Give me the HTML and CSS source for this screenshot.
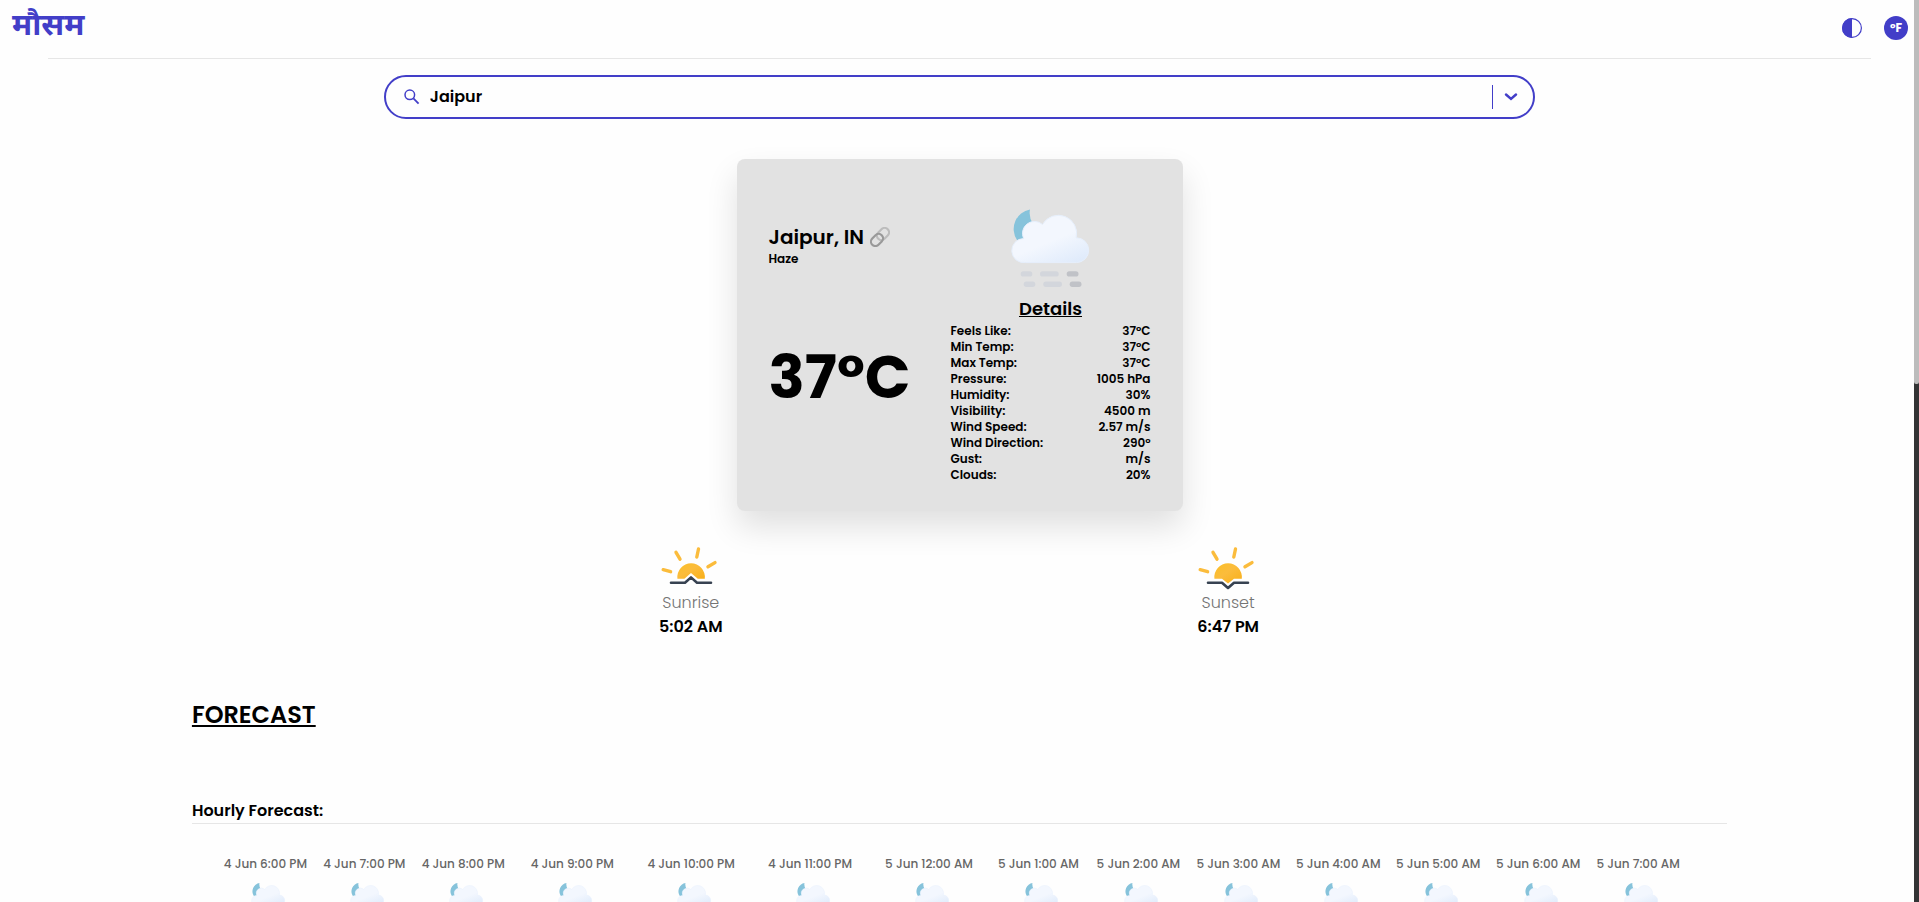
FILE: index.html
```html
<!DOCTYPE html>
<html lang="en">
<head>
<meta charset="utf-8">
<title>मौसम</title>
<link rel="stylesheet" href="styles.css">
</head>
<body>
<svg class="defs" aria-hidden="true">
  <defs>
    <linearGradient id="cloudFill" x1="0.3" y1="0.1" x2="0.9" y2="1">
      <stop offset="0" stop-color="#f3f7fe"/><stop offset="0.45" stop-color="#f3f7fe"/><stop offset="1" stop-color="#deeafb"/>
    </linearGradient>
    <linearGradient id="sunFill" x1="0" y1="0" x2="1" y2="1">
      <stop offset="0" stop-color="#fbbf24"/><stop offset="0.45" stop-color="#fbbc3c"/><stop offset="1" stop-color="#f8af18"/>
    </linearGradient>
    <symbol id="haze" viewBox="0 0 100 100">
      <path fill="#86c3db" d="M29 18.5A19.8 19.8 0 0 0 16 49L34 46L32 33Q27.5 26 29 18.5Z"/>
      <path fill="url(#cloudFill)" stroke="#e6effc" stroke-width="1" d="M24.4 71.6H75.4A12.4 12.4 0 1 0 75.2 46.8A18.3 18.3 0 0 0 41.5 33.5A12 12 0 0 0 22.6 47.5A12.1 12.1 0 1 0 24.4 71.6Z"/>
      <g fill="#d3d6dc">
        <rect x="19.7" y="80.2" width="11.6" height="5.3" rx="2.6"/>
        <rect x="39" y="80.2" width="18.7" height="5.3" rx="2.6"/>
        <rect x="22.7" y="90.6" width="11.6" height="5.3" rx="2.6"/>
        <rect x="42.3" y="90.6" width="18.7" height="5.3" rx="2.6"/>
      </g>
      <g fill="#c0c2c7">
        <rect x="65.7" y="80.2" width="11.8" height="5.3" rx="2.6"/>
        <rect x="68.7" y="90.6" width="11.8" height="5.3" rx="2.6"/>
      </g>
    </symbol>
    <symbol id="rays" viewBox="0 0 64 64">
      <path fill="none" stroke="#fbbc3c" stroke-width="3.4" stroke-linecap="round" d="M17 25.3L21 32.2M39.5 22L37.8 30M56 35.6L49 39.8M4.2 42.7L11.6 44.7"/>
    </symbol>
  </defs>
</svg>

<header class="topbar">
  <a class="logo" href="#">मौसम</a>
  <div class="actions">
    <button class="theme" type="button" aria-label="Toggle theme">
      <svg viewBox="0 0 20 20"><circle cx="10" cy="10" r="9.4" fill="none" stroke="currentColor" stroke-width="1.2"/><path fill="currentColor" d="M10 0A10 10 0 0 0 10 20Z"/></svg>
    </button>
    <button class="unit" type="button">°F</button>
  </div>
</header>
<hr class="rule">

<main>
  <form class="search" role="search">
    <svg class="search-icon" viewBox="0 0 16 16"><circle cx="5.8" cy="5.8" r="4.8" fill="none" stroke="currentColor" stroke-width="1.5"/><path d="M9.4 9.4L14.6 14.6" stroke="currentColor" stroke-width="1.8"/></svg>
    <input class="search-input" type="text" value="Jaipur" aria-label="City">
    <button class="search-toggle" type="button" aria-label="Show cities">
      <svg viewBox="0 0 14 8"><path d="M2 1.5L7 6L12 1.5" fill="none" stroke="currentColor" stroke-width="2.4" stroke-linecap="round"/></svg>
    </button>
  </form>

  <section class="card">
    <div class="summary">
      <div>
        <h1 class="city">Jaipur, IN
          <a class="link" href="#" aria-label="Link to city"><svg viewBox="0 0 20 20"><g fill="none" stroke-width="2.2"><rect x="6.3" y="2.6" width="13.4" height="8.8" rx="4.4" stroke="#bcbcbc" transform="rotate(-45 13 7)"/><rect x="0.3" y="8.6" width="13.4" height="8.8" rx="4.4" stroke="#999" transform="rotate(-45 7 13)"/></g></svg></a>
        </h1>
        <p class="condition">Haze</p>
      </div>
      <p class="temp">37°C</p>
    </div>
    <div class="details">
      <svg class="weather" role="img" aria-label="Haze"><use href="#haze"/></svg>
      <h2 class="details-title">Details</h2>
      <dl class="facts">
        <div><dt>Feels Like:</dt><dd>37°C</dd></div>
        <div><dt>Min Temp:</dt><dd>37°C</dd></div>
        <div><dt>Max Temp:</dt><dd>37°C</dd></div>
        <div><dt>Pressure:</dt><dd>1005 hPa</dd></div>
        <div><dt>Humidity:</dt><dd>30%</dd></div>
        <div><dt>Visibility:</dt><dd>4500 m</dd></div>
        <div><dt>Wind Speed:</dt><dd>2.57 m/s</dd></div>
        <div><dt>Wind Direction:</dt><dd>290°</dd></div>
        <div><dt>Gust:</dt><dd>m/s</dd></div>
        <div><dt>Clouds:</dt><dd>20%</dd></div>
      </dl>
    </div>
  </section>

  <section class="sun">
    <div class="sun-item">
      <svg class="sun-icon" viewBox="0 0 64 64"><use href="#rays"/><path fill="url(#sunFill)" d="M18.4 51.7A13.8 13.8 0 1 1 45.8 51.7H38.8L32 46L25.4 51.7Z"/><path fill="none" stroke="#374251" stroke-width="2.6" stroke-linecap="round" stroke-linejoin="round" d="M12 55.7H26L32 50.4L38 55.7H52"/></svg>
      <span class="sun-name">Sunrise</span>
      <strong class="sun-time">5:02 AM</strong>
    </div>
    <div class="sun-item">
      <svg class="sun-icon" viewBox="0 0 64 64"><use href="#rays"/><path fill="url(#sunFill)" d="M18.4 51.7A13.8 13.8 0 1 1 45.8 51.7H38L32 56.6L26 51.7Z"/><path fill="none" stroke="#374251" stroke-width="2.6" stroke-linecap="round" stroke-linejoin="round" d="M12 55.7H26L32 61L38 55.7H52"/></svg>
      <span class="sun-name">Sunset</span>
      <strong class="sun-time">6:47 PM</strong>
    </div>
  </section>

  <section class="forecast">
    <h2 class="forecast-title">FORECAST</h2>
    <h3 class="hourly-title">Hourly Forecast:</h3>
    <ol class="hours">
      <li>4 Jun 6:00 PM<svg><use href="#haze"/></svg></li>
      <li>4 Jun 7:00 PM<svg><use href="#haze"/></svg></li>
      <li>4 Jun 8:00 PM<svg><use href="#haze"/></svg></li>
      <li>4 Jun 9:00 PM<svg><use href="#haze"/></svg></li>
      <li>4 Jun 10:00 PM<svg><use href="#haze"/></svg></li>
      <li>4 Jun 11:00 PM<svg><use href="#haze"/></svg></li>
      <li>5 Jun 12:00 AM<svg><use href="#haze"/></svg></li>
      <li>5 Jun 1:00 AM<svg><use href="#haze"/></svg></li>
      <li>5 Jun 2:00 AM<svg><use href="#haze"/></svg></li>
      <li>5 Jun 3:00 AM<svg><use href="#haze"/></svg></li>
      <li>5 Jun 4:00 AM<svg><use href="#haze"/></svg></li>
      <li>5 Jun 5:00 AM<svg><use href="#haze"/></svg></li>
      <li>5 Jun 6:00 AM<svg><use href="#haze"/></svg></li>
      <li>5 Jun 7:00 AM<svg><use href="#haze"/></svg></li>
    </ol>
  </section>
</main>
<div class="scrollbar" aria-hidden="true"><div class="scrollbar-thumb"></div></div>
</body>
</html>
```
FILE: styles.css
```css
* { box-sizing: border-box; margin: 0; padding: 0; }
html { height: 100%; overflow: hidden; }
body {
  height: 100%;
  overflow: hidden;
  background: #fefefe;
  color: #000;
  font-family: Poppins, Inter, "Noto Sans", sans-serif;
  font-size: 16px;
  line-height: 24px;
}
svg { display: block; flex: none; }
button { border: 0; background: none; font: inherit; color: inherit; cursor: pointer; }
.defs { position: absolute; width: 0; height: 0; }

.topbar {
  display: flex;
  justify-content: space-between;
  align-items: center;
  height: 58px;
  padding: 0 11px 2px 12px;
}
.logo {
  color: #423ec8;
  font-family: "Noto Sans Devanagari", "Noto Sans", sans-serif;
  font-size: 31px;
  font-weight: 700;
  line-height: 42px;
  text-decoration: none;
}
.actions { display: flex; align-items: center; gap: 22px; color: #423ec8; }
.theme svg { width: 20px; height: 20px; }
.unit {
  width: 24px;
  height: 24px;
  border-radius: 50%;
  background: #423ec8;
  color: #fff;
  font-size: 12px;
  font-weight: 700;
  line-height: 24px;
}
.rule { border: 0; height: 1px; width: 95%; margin: 0 auto; background: #e6e6e6; }

.search {
  display: flex;
  align-items: center;
  width: 60%;
  height: 44px;
  margin: 16px auto 0;
  padding: 0 15px 0 18px;
  border: 2px solid #423ec8;
  border-radius: 22px;
  color: #423ec8;
}
.search-icon { width: 16px; height: 16px; }
.search-input {
  flex: 1;
  min-width: 0;
  margin-left: 10px;
  border: 0;
  outline: 0;
  background: none;
  color: #000;
  font: inherit;
  font-weight: 600;
}
.search-toggle {
  height: 24px;
  padding-left: 11px;
  border-left: 1px solid #423ec8;
}
.search-toggle svg { width: 14px; height: 8px; }

.card {
  display: grid;
  grid-template-columns: 150px 200px;
  gap: 32px;
  width: max-content;
  margin: 40px auto 0;
  padding: 32px 32px 28px;
  border-radius: 8px;
  background: #e2e2e2;
  box-shadow: 0 16px 32px rgba(0, 0, 0, 0.12);
  font-weight: 600;
}
.summary { display: flex; flex-direction: column; gap: 70px; padding-top: 32px; }
.city {
  display: flex;
  align-items: center;
  gap: 6px;
  font-size: 20px;
  font-weight: 600;
  line-height: 28px;
  white-space: nowrap;
}
.link svg { width: 20px; height: 20px; }
.condition { font-size: 12px; line-height: 16px; }
.temp { font-size: 60px; font-weight: 700; line-height: 80px; white-space: nowrap; }
.weather { width: 100px; height: 100px; margin: 0 auto; }
.details-title {
  margin-top: 4px;
  font-size: 18px;
  font-weight: 600;
  line-height: 28px;
  text-align: center;
  text-decoration: underline;
}
.facts { font-size: 12px; line-height: 16px; }
.facts div { display: flex; justify-content: space-between; }

.sun {
  display: grid;
  grid-template-columns: 1fr 1fr;
  width: 56%;
  margin: 16px auto 0;
}
.sun-item { display: flex; flex-direction: column; align-items: center; }
.sun-icon { width: 64px; height: 64px; }
.sun-name { color: #757575; font-weight: 300; }
.sun-time { font-weight: 600; }

.forecast { width: 80%; margin: 60px auto 0; }
.forecast-title {
  font-size: 24px;
  font-weight: 600;
  line-height: 32px;
  text-decoration: underline;
}
.hourly-title {
  margin-top: 68px;
  border-bottom: 1px solid #e6e6e6;
  font-size: 16px;
  font-weight: 600;
}
.hours {
  display: grid;
  grid-template-columns: repeat(3, 99fr) repeat(4, 119fr) repeat(7, 100fr);
  padding: 32px 39px 0 24px;
  color: #666;
  font-size: 12px;
  font-weight: 500;
  line-height: 16px;
  list-style: none;
}
.hours li { text-align: center; white-space: nowrap; }
.hours svg { box-sizing: content-box; width: 43px; height: 43px; margin: 3px auto 0; padding-left: 7px; }

.scrollbar { position: fixed; top: 0; right: 0; width: 5px; height: 100%; background: #333435; }
.scrollbar-thumb { height: 384px; background: #bcbcbc; border-radius: 0 0 2px 2px; }
```
